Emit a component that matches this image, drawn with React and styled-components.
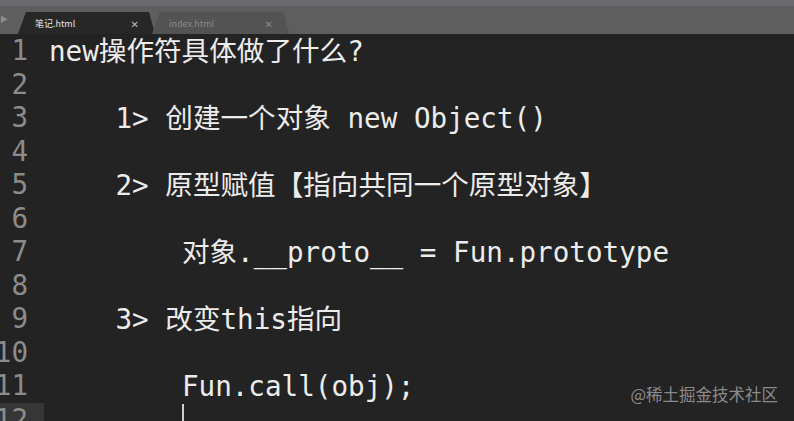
import React from "react";
import styled, { createGlobalStyle } from "styled-components";

const GlobalStyle = createGlobalStyle`
  html, body {
    margin: 0;
    padding: 0;
    background: #232323;
    overflow: hidden;
  }
`;

const Window = styled.div`
  position: relative;
  width: 794px;
  height: 421px;
  overflow: hidden;
  background: #232323;
  display: flex;
  flex-direction: column;
`;

const TabBar = styled.div`
  height: 28px;
  flex-shrink: 0;
  background: #5e5e5e;
  border-top: 6px solid #696a6e;
  display: flex;
  align-items: flex-end;
  font-family: "Noto Sans CJK SC", "DejaVu Sans", sans-serif;
`;

const Arrow = styled.div`
  width: 18px;
  height: 100%;
  display: flex;
  align-items: center;
  padding-bottom: 4px;
  box-sizing: border-box;
  color: #8d8d8d;
  font-size: 8px;
`;

const Tab = styled.div`
  width: 137px;
  height: 22px;
  margin-right: -3px;
  background: ${p => (p.active ? "#272727" : "#535353")};
  clip-path: polygon(0 100%, 8px 0, calc(100% - 6px) 0, 100% 100%);
  display: flex;
  align-items: center;
  justify-content: space-between;
  padding: 0 16px 0 17px;
  box-sizing: border-box;
  font-size: 9px;
  color: ${p => (p.active ? "#e6e6e6" : "#8a8a8a")};
`;

const Close = styled.span`
  font-size: 10px;
  color: ${p => (p.active ? "#bdbdbd" : "#8a8a8a")};
`;

const Editor = styled.div`
  flex: 1;
  display: flex;
  font-family: "DejaVu Sans Mono", "Noto Sans CJK SC", monospace;
  font-size: 27.6px;
  line-height: 33.5px;
`;

const Gutter = styled.div`
  width: 44px;
  flex-shrink: 0;
  display: flex;
  flex-direction: column;
`;

const LineNo = styled.div`
  height: 33.5px;
  text-align: right;
  padding-right: 16px;
  color: #8c8c8c;
  white-space: nowrap;
  background: ${p => (p.current ? "#363636" : "transparent")};
  direction: rtl;
`;

const Code = styled.div`
  flex: 1;
  padding-left: 5px;
  padding-top: 1px;
  display: flex;
  flex-direction: column;
`;

const Line = styled.div`
  height: 33.5px;
  white-space: pre;
  color: #ececec;
`;

const Cursor = styled.span`
  display: inline-block;
  width: 2px;
  height: 30px;
  background: #cfcfcf;
  vertical-align: top;
`;

const Watermark = styled.div`
  position: absolute;
  right: 16px;
  bottom: 15px;
  font-family: "Noto Sans CJK SC", "DejaVu Sans", sans-serif;
  font-size: 16.5px;
  color: #8a8a8a;
`;

const lines = [
  "new操作符具体做了什么?",
  "",
  "    1> 创建一个对象 new Object()",
  "",
  "    2> 原型赋值【指向共同一个原型对象】",
  "",
  "        对象.__proto__ = Fun.prototype",
  "",
  "    3> 改变this指向",
  "",
  "        Fun.call(obj);",
  "        ",
];

export default function App() {
  return (
    <Window>
      <GlobalStyle />
      <TabBar>
        <Arrow>▶</Arrow>
        <Tab active>
          <span>笔记.html</span>
          <Close active>✕</Close>
        </Tab>
        <Tab>
          <span>index.html</span>
          <Close>✕</Close>
        </Tab>
      </TabBar>
      <Editor>
        <Gutter>
          {lines.map((_, i) => (
            <LineNo key={i} current={i === 11}>
              {i + 1}
            </LineNo>
          ))}
        </Gutter>
        <Code>
          {lines.map((text, i) => (
            <Line key={i}>
              {text}
              {i === 11 && <Cursor />}
            </Line>
          ))}
        </Code>
      </Editor>
      <Watermark>@稀土掘金技术社区</Watermark>
    </Window>
  );
}
